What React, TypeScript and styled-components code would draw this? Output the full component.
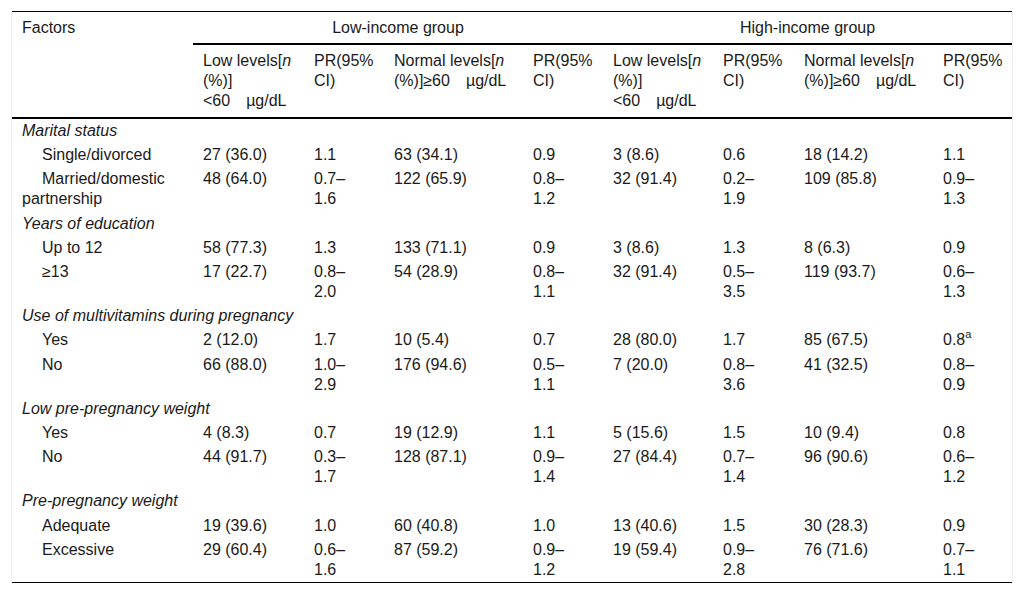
import React from "react";
import styled, { createGlobalStyle } from "styled-components";

const GlobalStyle = createGlobalStyle`
  html, body {
    margin: 0;
    padding: 0;
    background: #ffffff;
  }

  body {
    font-family: "Liberation Sans", Arial, Helvetica, sans-serif;
    color: #1a1a1a;
  }
`;

const Frame = styled.div`
  margin: 11px 0 0 11px;
  width: 1000px;
  border-left: 1px solid #ececec;
  border-right: 1px solid #ececec;
`;

const Table = styled.table`
  width: 1000px;
  table-layout: fixed;
  border-collapse: separate;
  border-spacing: 0;
  border-top: 1px solid #000;
  font-size: 16px;
  line-height: 20px;
`;

const HeadCell = styled.th<{ $center?: boolean; $tall?: boolean }>`
  font-weight: normal;
  text-align: ${(p) => (p.$center ? "center" : "left")};
  vertical-align: top;
  white-space: nowrap;
  padding: ${(p) => (p.$tall ? "6px 10px" : "5.5px 10px")};
  border-bottom: 2px solid #000;
`;

const TopLeftCell = styled(HeadCell)`
  padding: 5.5px 10px;
`;

const GroupRow = styled.tr``;

const GroupLabel = styled.td`
  font-style: italic;
  padding: 2.1px 10px;
  white-space: nowrap;
`;

const Cell = styled.td<{ $indent?: boolean; $last?: boolean }>`
  vertical-align: top;
  white-space: nowrap;
  padding: 2.1px 10px;
  text-indent: ${(p) => (p.$indent ? "20px" : "0")};
  border-bottom: ${(p) => (p.$last ? "1px solid #000" : "none")};
`;

const Sup = styled.sup`
  font-size: 11px;
  line-height: 0;
  vertical-align: 7px;
`;

type Value = string | [string, string];

interface Row {
  label: string;
  values: Value[];
  note?: number;
}

interface Group {
  title: string;
  rows: Row[];
}

const groups: Group[] = [
  {
    title: "Marital status",
    rows: [
      { label: "Single/divorced", values: ["27 (36.0)", "1.1", "63 (34.1)", "0.9", "3 (8.6)", "0.6", "18 (14.2)", "1.1"] },
      {
        label: "Married/domestic\npartnership",
        values: ["48 (64.0)", ["0.7", "1.6"], "122 (65.9)", ["0.8", "1.2"], "32 (91.4)", ["0.2", "1.9"], "109 (85.8)", ["0.9", "1.3"]],
      },
    ],
  },
  {
    title: "Years of education",
    rows: [
      { label: "Up to 12", values: ["58 (77.3)", "1.3", "133 (71.1)", "0.9", "3 (8.6)", "1.3", "8 (6.3)", "0.9"] },
      {
        label: "≥13",
        values: ["17 (22.7)", ["0.8", "2.0"], "54 (28.9)", ["0.8", "1.1"], "32 (91.4)", ["0.5", "3.5"], "119 (93.7)", ["0.6", "1.3"]],
      },
    ],
  },
  {
    title: "Use of multivitamins during pregnancy",
    rows: [
      { label: "Yes", values: ["2 (12.0)", "1.7", "10 (5.4)", "0.7", "28 (80.0)", "1.7", "85 (67.5)", "0.8"], note: 7 },
      {
        label: "No",
        values: ["66 (88.0)", ["1.0", "2.9"], "176 (94.6)", ["0.5", "1.1"], "7 (20.0)", ["0.8", "3.6"], "41 (32.5)", ["0.8", "0.9"]],
      },
    ],
  },
  {
    title: "Low pre-pregnancy weight",
    rows: [
      { label: "Yes", values: ["4 (8.3)", "0.7", "19 (12.9)", "1.1", "5 (15.6)", "1.5", "10 (9.4)", "0.8"] },
      {
        label: "No",
        values: ["44 (91.7)", ["0.3", "1.7"], "128 (87.1)", ["0.9", "1.4"], "27 (84.4)", ["0.7", "1.4"], "96 (90.6)", ["0.6", "1.2"]],
      },
    ],
  },
  {
    title: "Pre-pregnancy weight",
    rows: [
      { label: "Adequate", values: ["19 (39.6)", "1.0", "60 (40.8)", "1.0", "13 (40.6)", "1.5", "30 (28.3)", "0.9"] },
      {
        label: "Excessive",
        values: ["29 (60.4)", ["0.6", "1.6"], "87 (59.2)", ["0.9", "1.2"], "19 (59.4)", ["0.9", "2.8"], "76 (71.6)", ["0.7", "1.1"]],
      },
    ],
  },
];

const colWidths = [181, 111, 80, 139, 80, 110, 81, 139, 79];

const LowLevels = () => (
  <>
    Low levels[<i>n</i>
    <br />
    (%)]
    <br />
    &lt;60{"\u2003"}µg/dL
  </>
);

const NormalLevels = () => (
  <>
    Normal levels[<i>n</i>
    <br />
    (%)]≥60{"\u2003"}µg/dL
  </>
);

const PrHead = () => (
  <>
    PR(95%
    <br />
    CI)
  </>
);

const renderValue = (v: Value) =>
  Array.isArray(v) ? (
    <>
      {v[0]}–
      <br />
      {v[1]}
    </>
  ) : (
    v
  );

const renderLabel = (label: string) =>
  label.split("\n").map((part, i) => (
    <React.Fragment key={i}>
      {i > 0 && <br />}
      {part}
    </React.Fragment>
  ));

export default function App() {
  return (
    <>
      <GlobalStyle />
      <Frame>
        <Table>
          <colgroup>
            {colWidths.map((w, i) => (
              <col key={i} style={{ width: w }} />
            ))}
          </colgroup>
          <thead>
            <tr>
              <TopLeftCell rowSpan={2}>Factors</TopLeftCell>
              <HeadCell colSpan={4} $center>
                Low-income group
              </HeadCell>
              <HeadCell colSpan={4} $center>
                High-income group
              </HeadCell>
            </tr>
            <tr>
              <HeadCell $tall><LowLevels /></HeadCell>
              <HeadCell $tall><PrHead /></HeadCell>
              <HeadCell $tall><NormalLevels /></HeadCell>
              <HeadCell $tall><PrHead /></HeadCell>
              <HeadCell $tall><LowLevels /></HeadCell>
              <HeadCell $tall><PrHead /></HeadCell>
              <HeadCell $tall><NormalLevels /></HeadCell>
              <HeadCell $tall><PrHead /></HeadCell>
            </tr>
          </thead>
          <tbody>
            {groups.map((g, gi) => {
              const lastGroup = gi === groups.length - 1;
              return (
                <React.Fragment key={g.title}>
                  <GroupRow>
                    <GroupLabel colSpan={9}>{g.title}</GroupLabel>
                  </GroupRow>
                  {g.rows.map((r, ri) => {
                    const last = lastGroup && ri === g.rows.length - 1;
                    return (
                      <tr key={r.label}>
                        <Cell $indent $last={last}>
                          {renderLabel(r.label)}
                        </Cell>
                        {r.values.map((v, vi) => (
                          <Cell key={vi} $last={last}>
                            {renderValue(v)}
                            {r.note === vi && <Sup>a</Sup>}
                          </Cell>
                        ))}
                      </tr>
                    );
                  })}
                </React.Fragment>
              );
            })}
          </tbody>
        </Table>
      </Frame>
    </>
  );
}
